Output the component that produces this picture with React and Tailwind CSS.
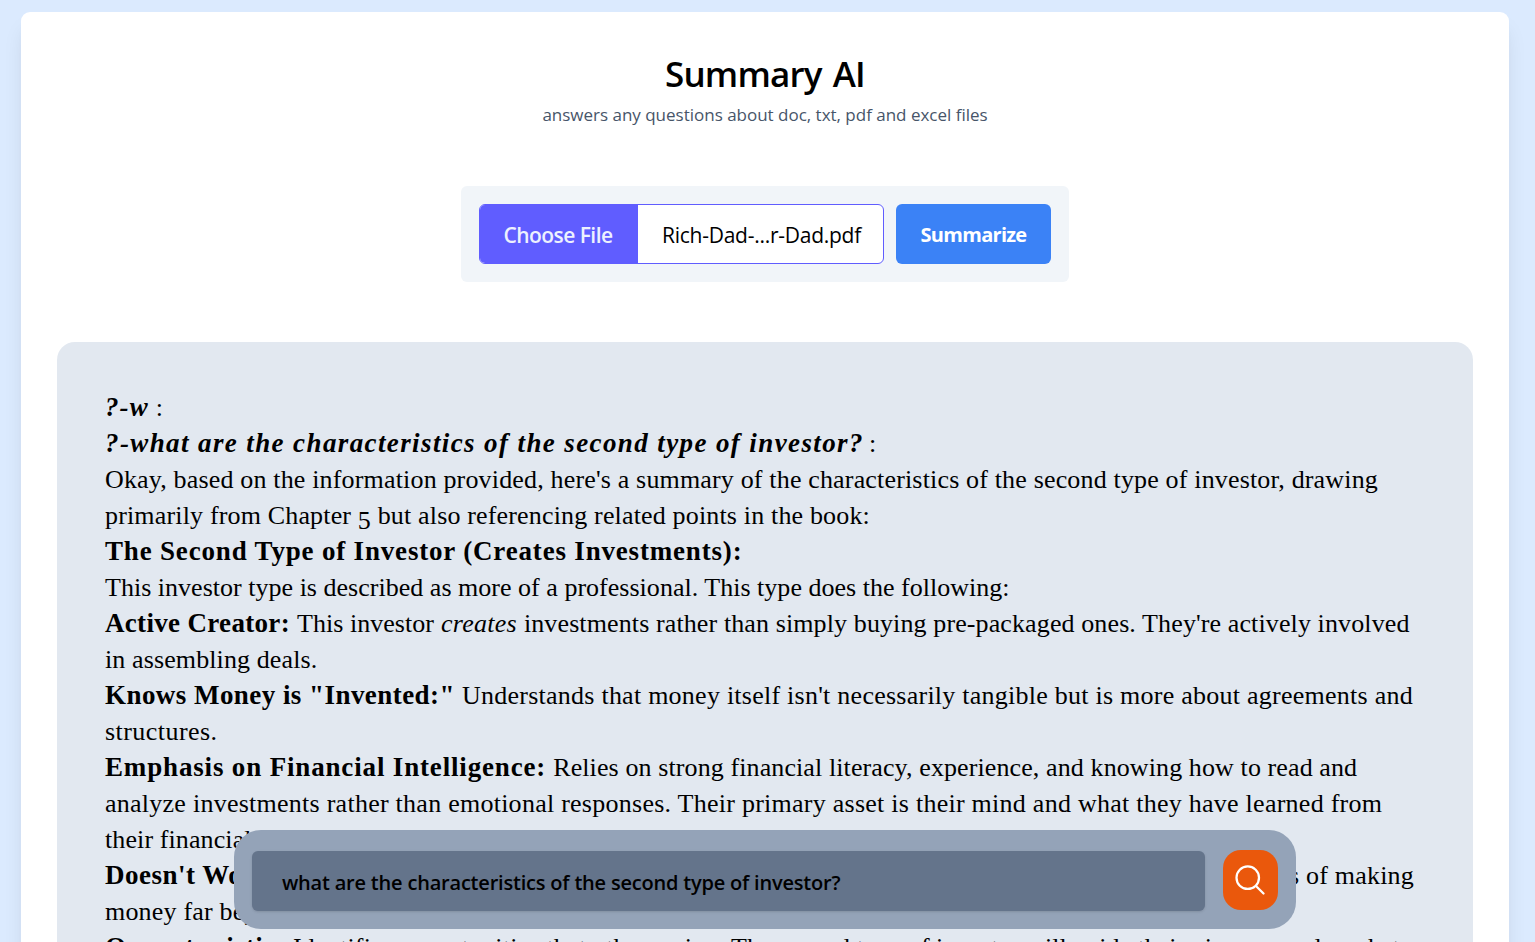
import React from "react";

function Line({ children, className = "" }) {
  return (
    <p className={`flex h-9 items-baseline gap-[7px] whitespace-nowrap leading-9 ${className}`}>
      {children}
    </p>
  );
}

function Answer() {
  return (
    <div className="h-[650px] rounded-[18px] bg-[#e2e8f0] px-12 py-12 font-['Liberation_Serif',serif] text-[26px] text-black">
      <Line>
        <strong className="text-[27px] leading-[35px] italic tracking-[1.1px]">?-w</strong>
        <span>:</span>
      </Line>
      <Line>
        <strong className="text-[27px] leading-[35px] italic tracking-[1.39px]">
          ?-what are the characteristics of the second type of investor?
        </strong>
        <span className="-ml-[2px]">:</span>
      </Line>
      <Line>
        <span className="tracking-[0.165px]">
          Okay, based on the information provided, here's a summary of the characteristics of the second type of investor, drawing
        </span>
      </Line>
      <Line>
        <span className="tracking-[0.163px]">
          primarily from Chapter <span className="inline-block translate-y-[5px]">5</span> but also referencing related points in the book:
        </span>
      </Line>
      <Line>
        <strong className="text-[27px] leading-[35px] tracking-[0.82px]">The Second Type of Investor (Creates Investments):</strong>
      </Line>
      <Line>
        <span className="tracking-[0.02px]">
          This investor type is described as more of a professional. This type does the following:
        </span>
      </Line>
      <Line>
        <strong className="text-[27px] leading-[34px] tracking-[0.32px]">Active Creator:</strong>
        <span className="tracking-[0.04px]">This investor</span>
        <em className="tracking-[0.26px]">creates</em>
        <span className="tracking-[0.112px]">
          investments rather than simply buying pre-packaged ones. They're actively involved
        </span>
      </Line>
      <Line>
        <span className="tracking-[0.11px]">in assembling deals.</span>
      </Line>
      <Line>
        <strong className="text-[27px] leading-[34px] tracking-[0.45px]">Knows Money is "Invented:"</strong>
        <span className="tracking-[0.248px]">
          Understands that money itself isn't necessarily tangible but is more about agreements and
        </span>
      </Line>
      <Line>
        <span className="tracking-[0.45px]">structures.</span>
      </Line>
      <Line>
        <strong className="text-[27px] leading-[34px] tracking-[0.84px]">Emphasis on Financial Intelligence:</strong>
        <span className="tracking-[0.104px]">
          Relies on strong financial literacy, experience, and knowing how to read and
        </span>
      </Line>
      <Line>
        <span className="tracking-[0.255px]">
          analyze investments rather than emotional responses. Their primary asset is their mind and what they have learned from
        </span>
      </Line>
      <Line>
        <span className="tracking-[0.1px]">their financial education.</span>
      </Line>
      <Line className="w-[1309px] justify-between">
        <strong className="text-[27px] leading-[34px] tracking-[0.5px]">Doesn't Work for Money:</strong>
        <span className="tracking-[0.2px]">ways of making</span>
      </Line>
      <Line>
        <span className="tracking-[0.2px]">money far beyond</span>
      </Line>
      <Line>
        <strong className="w-[181px] text-[27px] leading-[34px] tracking-[0.7px]">Opportunistic:</strong>
        <span className="w-[431px] tracking-[0.2px]">Identifies opportunities that others miss.</span>
        <span className="tracking-[0px]">The second type of investor will guide their view around market</span>
      </Line>
    </div>
  );
}

function Toolbar() {
  return (
    <div className="mt-[60px] flex h-24 w-[608px] gap-3 rounded-md bg-[#f1f5f9] p-[18px]">
      <div className="flex w-[405px] items-stretch overflow-hidden rounded-md border border-[#605dff] bg-white text-[21px]">
        <button className="w-[158px] bg-[#605dff] pr-[2px] pt-[4px] font-semibold tracking-[-0.55px] text-[#edf1fe]">
          Choose File
        </button>
        <span className="flex items-center pl-6 pt-[4px] tracking-[-0.257px] text-black">Rich-Dad-...r-Dad.pdf</span>
      </div>
      <button className="w-[155px] rounded-md bg-[#3b82f6] pt-[1px] text-[20px] font-bold tracking-[-0.7px] text-white">
        Summarize
      </button>
    </div>
  );
}

function SearchBar() {
  return (
    <div className="fixed left-[234px] top-[830px] flex h-[99px] w-[1062px] items-center gap-[18px] rounded-[27px] bg-[#94a3b8] px-[18px]">
      <div className="mt-[3px] flex h-[60px] w-[953px] items-center rounded-md bg-[#64748b] pl-[30px] pt-[4px] text-[20px] font-semibold tracking-[-0.2px] text-black shadow-sm">
        what are the characteristics of the second type of investor?
      </div>
      <button aria-label="Search" className="flex h-[60px] w-[55px] items-center justify-center rounded-[18px] bg-[#ea580c] pr-[1.5px] text-white">
        <svg className="size-9 shrink-0" viewBox="0 0 24 24" fill="none" stroke="currentColor" strokeWidth="1.5" strokeLinecap="round" strokeLinejoin="round">
          <path d="m21 21-5.197-5.197m0 0A7.5 7.5 0 1 0 5.196 5.196a7.5 7.5 0 0 0 10.607 10.607Z" />
        </svg>
      </button>
    </div>
  );
}

export default function App() {
  return (
    <div className="h-[942px] overflow-hidden bg-[#dbeafe] pl-[21px] pt-3 font-['Open_Sans',sans-serif]">
      <main className="w-[1488px] rounded-[9px] bg-white px-9 pt-[36px] shadow-[0_15px_22px_-4px_rgba(0,0,0,0.1),0_6px_9px_-6px_rgba(0,0,0,0.1)]">
        <header className="flex flex-col items-center">
          <h1 className="h-[54px] text-[35px] font-semibold leading-[52px] tracking-[-0.85px] text-black [word-spacing:3px]">Summary AI</h1>
          <p className="h-6 text-[17px] leading-[26px] tracking-[-0.01px] text-[#475569]">
            answers any questions about doc, txt, pdf and excel files
          </p>
          <Toolbar />
        </header>
        <section className="mt-[60px]">
          <Answer />
        </section>
      </main>
      <SearchBar />
    </div>
  );
}
